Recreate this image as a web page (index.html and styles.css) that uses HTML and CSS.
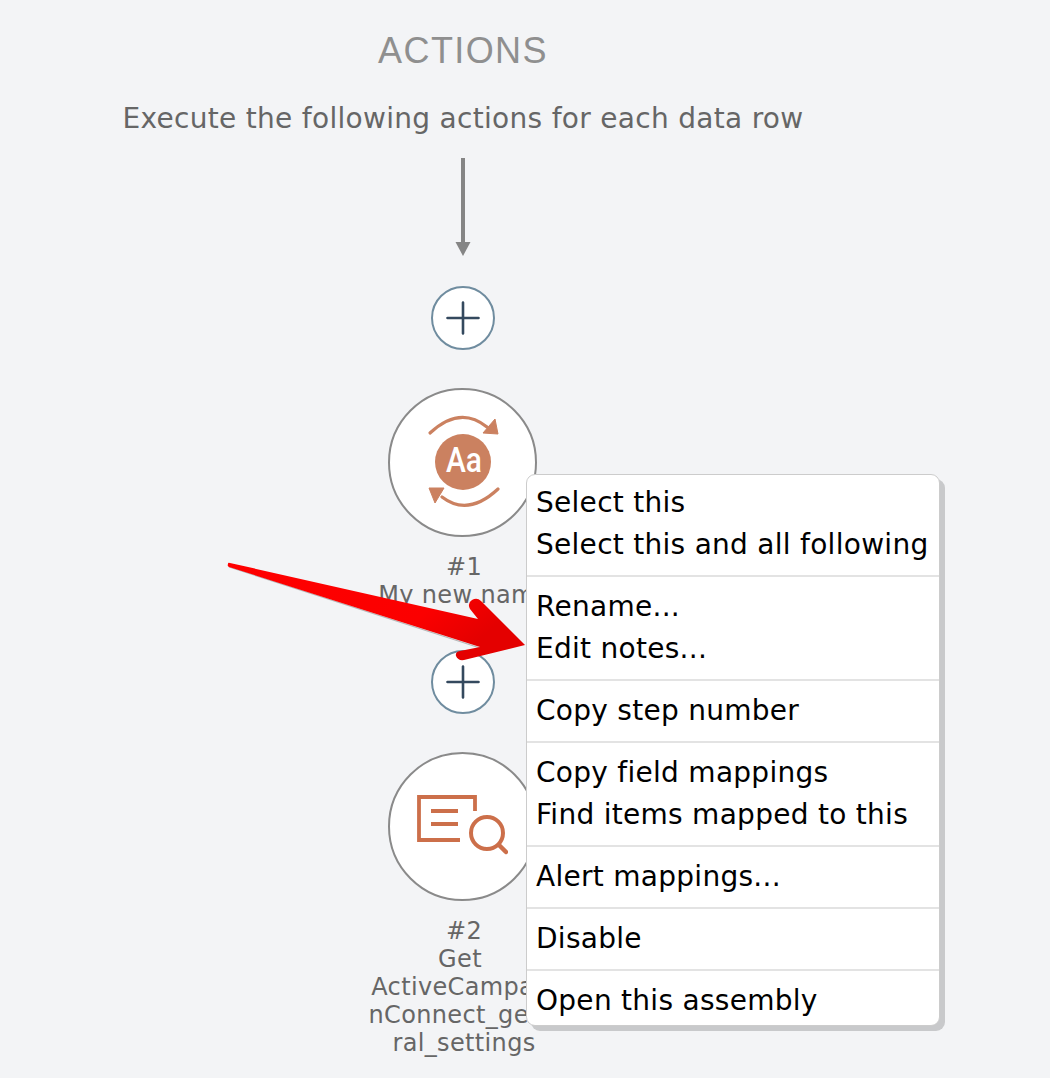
FILE: index.html
```
<!DOCTYPE html>
<html lang="en">
<head>
<meta charset="utf-8">
<title>Actions</title>
<link rel="stylesheet" href="styles.css">
</head>
<body>
<div class="canvas">
  <main class="flow">
    <h1 class="title">ACTIONS</h1>
    <p class="subtitle">Execute the following actions for each data row</p>
    <svg class="connector" width="16" height="99" viewBox="0 0 16 99" aria-hidden="true">
      <path d="M8 0V86" stroke="#858585" stroke-width="4" fill="none"/>
      <path d="M0.500 84H15.500L8 98Z" fill="#858585"/>
    </svg>
    <button class="add" aria-label="Add step">
      <svg width="34" height="34" viewBox="0 0 34 34"><path d="M17 1.500V32.500M1.500 17H32.500" stroke="#34495e" stroke-width="2.600" stroke-linecap="round"/></svg>
    </button>
    <div class="step step-one">
      <div class="node">
        <svg class="node-art" width="80" height="92" viewBox="0 0 80 92" aria-hidden="true">
          <path d="M7 16Q37 -12 64 10" stroke="#cb8160" stroke-width="3.200" fill="none" stroke-linecap="round"/>
          <path d="M72 2L75 17 60 16Z" fill="#cb8160" stroke="#cb8160" stroke-linejoin="round"/>
          <path d="M75 72Q45 100 19 80" stroke="#cb8160" stroke-width="3.200" fill="none" stroke-linecap="round"/>
          <path d="M6 71L21 71 12 86Z" fill="#cb8160" stroke="#cb8160" stroke-linejoin="round"/>
          <circle cx="40" cy="45" r="28" fill="#cb8160"/>
          <text x="41" y="55" class="aa" textLength="36" lengthAdjust="spacingAndGlyphs">Aa</text>
        </svg>
      </div>
      <div class="label label-one">#1<br>My new name</div>
    </div>
    <button class="add add-two" aria-label="Add step">
      <svg width="34" height="34" viewBox="0 0 34 34"><path d="M17 1.500V32.500M1.500 17H32.500" stroke="#34495e" stroke-width="2.600" stroke-linecap="round"/></svg>
    </button>
    <div class="step step-two">
      <div class="node">
        <svg class="node-icon" width="92" height="62" viewBox="0 0 92 62" aria-hidden="true">
          <path d="M44 46H3V3H59V17" stroke="#cc6f4a" stroke-width="3.800" fill="none"/>
          <path d="M15 17H42M15 30H42" stroke="#cc6f4a" stroke-width="3.800" fill="none"/>
          <circle cx="71" cy="39" r="16" stroke="#cc6f4a" stroke-width="4" fill="none"/>
          <path d="M83 51L90 58" stroke="#cc6f4a" stroke-width="4.500" fill="none" stroke-linecap="round"/>
        </svg>
      </div>
      <div class="label">#2<br>Get&nbsp; ActiveCampaignConnect_general_settings</div>
    </div>
  </main>

  <nav class="menu">
    <div class="group group-first">
      <div class="item">Select this</div>
      <div class="item">Select this and all following</div>
    </div>
    <div class="group">
      <div class="item">Rename...</div>
      <div class="item">Edit notes...</div>
    </div>
    <div class="group">
      <div class="item">Copy step number</div>
    </div>
    <div class="group">
      <div class="item">Copy field mappings</div>
      <div class="item">Find items mapped to this</div>
    </div>
    <div class="group">
      <div class="item">Alert mappings...</div>
    </div>
    <div class="group">
      <div class="item">Disable</div>
    </div>
    <div class="group group-last">
      <div class="item">Open this assembly</div>
    </div>
  </nav>

  <svg class="pointer" width="320" height="110" viewBox="0 0 320 110" aria-hidden="true">
    <defs>
      <linearGradient id="red" x1="0" y1="0" x2="1" y2="0.4">
        <stop offset="0" stop-color="#ff0000"/>
        <stop offset="0.75" stop-color="#fb0000"/>
        <stop offset="1" stop-color="#e40000"/>
      </linearGradient>
    </defs>
    <path d="M3 6L254 87" stroke="#6b6b6b" stroke-width="1.200" opacity="0.45" fill="none"/>
    <path d="M2 3Q2 1 4 2L252 58 244 48Q241 42 246 39 251 36 255 40L299 84 238 99Q232 100 230 95 229 91 234 90L254 86 3 6Q1 5 2 3Z" fill="url(#red)"/>
  </svg>
</div>
</body>
</html>
```
FILE: styles.css
```
* { box-sizing: border-box; }
html, body { margin: 0; padding: 0; }
body {
  width: 1050px;
  height: 1078px;
  overflow: hidden;
  background: #f3f4f6;
  font-family: "DejaVu Sans", sans-serif;
}
.canvas { position: relative; width: 1050px; height: 1078px; overflow: hidden; }
.flow {
  width: 925px;
  display: flex;
  flex-direction: column;
  align-items: center;
  padding-top: 30px;
}
.title {
  margin: 0 0 0 1px;
  font: 400 36px/42px "Liberation Sans", Arial, sans-serif;
  letter-spacing: 1.4px;
  color: #8f8f8f;
}
.subtitle {
  margin: 26px 0 0 1px;
  font-size: 28px;
  letter-spacing: 0.3px;
  line-height: 42px;
  color: #666;
  white-space: nowrap;
}
.connector { display: block; margin: 18px 0 0 1px; }
.add {
  display: flex;
  align-items: center;
  justify-content: center;
  width: 64px;
  height: 64px;
  margin-top: 29px;
  padding: 0;
  background: #fff;
  border: 2px solid #6f8c9f;
  border-radius: 50%;
}
.add-two { margin-top: 0; }
.step { display: flex; flex-direction: column; align-items: center; }
.step-one { margin-top: 38px; height: 262px; }
.step-two { margin-top: 38px; }
.node {
  display: flex;
  align-items: center;
  justify-content: center;
  width: 149px;
  height: 149px;
  background: #fff;
  border: 2px solid #8a8a8a;
  border-radius: 50%;
}
.node-art { overflow: visible; }
.node-icon { margin: -3px 0 0 -1px; }
.aa {
  font: 500 35px "Roboto", "Liberation Sans", sans-serif;
  fill: #fff;
  text-anchor: middle;
}
.label {
  width: 192px;
  margin: 16px 0 0 3px;
  font-size: 24px;
  letter-spacing: 0.35px;
  line-height: 28px;
  color: #666;
  text-align: center;
  overflow-wrap: anywhere;
}
.menu {
  position: absolute;
  left: 526px;
  top: 474px;
  width: 414px;
  height: 552px;
  background: #fff;
  border: 1px solid #ccc;
  border-radius: 9px;
  box-shadow: 5px 5px 0 #c8c9cb;
  color: #000;
  font-size: 28px;
  letter-spacing: 0.28px;
}
.group { padding: 9px 0 9px 9px; border-bottom: 2px solid #e3e3e3; }
.group-first { padding-top: 7px; }
.group-last { border-bottom: 0; }
.item { height: 42px; line-height: 42px; white-space: nowrap; }
.pointer { position: absolute; left: 226px; top: 561px; }
```
